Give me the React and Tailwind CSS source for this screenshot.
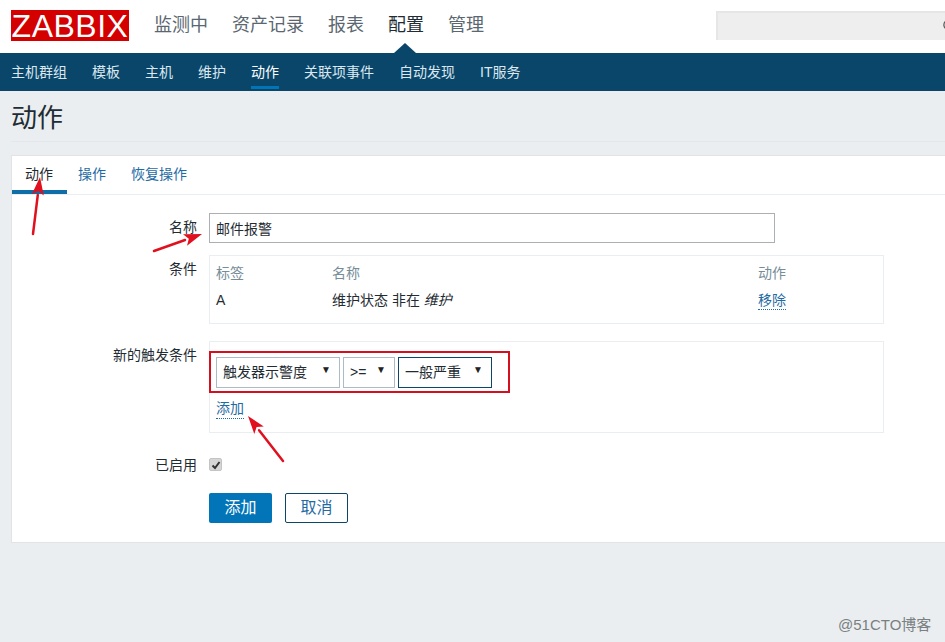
import { Search } from "lucide-react";

const topNav = ["监测中", "资产记录", "报表", "配置", "管理"];
const subNav = ["主机群组", "模板", "主机", "维护", "动作", "关联项事件", "自动发现", "IT服务"];

const Arrow = ({ x1, y1, x2, y2 }) => {
  // head is drawn back along the line from the tip
  const len = Math.hypot(x2 - x1, y2 - y1);
  const ux = (x2 - x1) / len;
  const uy = (y2 - y1) / len;
  const bx = x2 - ux * 18;
  const by = y2 - uy * 18;
  const nx = -uy * 6;
  const ny = ux * 6;
  return (
    <g>
      <line x1={x1} y1={y1} x2={bx} y2={by} stroke="#e0101e" strokeWidth="2.5" strokeLinecap="round" />
      <polygon points={`${x2},${y2} ${bx + nx},${by + ny} ${bx + ux * 4},${by + uy * 4} ${bx - nx},${by - ny}`} fill="#e0101e" />
    </g>
  );
};

const Dropdown = ({ label, className }) => (
  <div className={`flex items-center justify-between h-[31px] px-[6px] border bg-white text-[14px] text-[#1f2c33] ${className}`}>
    <span>{label}</span>
    <span className="text-[10px] text-[#222] -mt-1 mr-[2px]">▼</span>
  </div>
);

const Row = ({ label, children, className }) => (
  <div className={`flex ${className}`}>
    <div className="w-[185px] text-right text-[14px] text-[#1f2c33] shrink-0">{label}</div>
    <div className="ml-[12px]">{children}</div>
  </div>
);

const App = () => {
  return (
    <div className="relative w-[945px] h-[642px] overflow-hidden bg-[#ebeef0] font-['Liberation_Sans','Noto_Sans_CJK_SC',sans-serif]">
      {/* top bar */}
      <div className="relative flex items-start h-[53px] bg-white pl-[11px]">
        <div className="flex items-center justify-center w-[118px] h-[31px] mt-[10px] bg-[#d40000] text-white text-[32px] leading-none tracking-[0.5px]">
          ZABBIX
        </div>
        <div className="flex gap-[24px] ml-[25px] mt-[12px] text-[18px] leading-[26px] text-[#5a6770]">
          {topNav.map((item) => (
            <span key={item} className={item === "配置" ? "text-[#1f2c33]" : ""}>
              {item}
            </span>
          ))}
        </div>
        <div className="absolute left-[716px] top-[11px] w-[240px] h-[29px] bg-[#eeeeee] border-t-2 border-l-2 border-[#e6e6e6]">
          <Search className="absolute left-[224px] top-[5px] text-[#555]" size={15} />
        </div>
        <div className="absolute left-[394px] top-[43px] w-0 h-0 border-x-[11px] border-x-transparent border-b-[10px] border-b-[#0a466a]" />
      </div>

      {/* sub nav */}
      <div className="flex gap-[25px] h-[38px] pl-[11px] bg-[#0a466a] text-[14px] text-[#dbe8f0]">
        {subNav.map((item) => (
          <div
            key={item}
            className={`h-[36px] pt-[9px] leading-[20px] border-b-[3px] ${item === "动作" ? "border-[#0275b8] text-white" : "border-transparent"}`}
          >
            {item}
          </div>
        ))}
      </div>

      {/* title */}
      <div className="mx-[11px] mr-0 h-[51px] border-b border-[#e3e7ea] pt-[10px] text-[26px] leading-[34px] text-[#1f2c33]">
        动作
      </div>

      {/* panel */}
      <div className="ml-[11px] mt-[13px] w-[960px] h-[388px] bg-white border border-[#e0e4e7]">
        <div className="flex gap-[25px] h-[39px] pl-[13px] border-b border-[#ebeef0] text-[14px] text-[#1f6ba3]">
          <div className="relative leading-[36px] text-[#1f2c33]">
            动作
            <div className="absolute -left-[13px] top-[34px] w-[55px] h-[4px] bg-[#0f6ea8]" />
          </div>
          <div className="leading-[36px]">操作</div>
          <div className="leading-[36px]">恢复操作</div>
        </div>

        <div className="pt-[18px]">
          <Row label="名称" className="leading-[28px]">
            <input
              readOnly
              value="邮件报警"
              className="block w-[566px] h-[30px] px-[6px] border border-[#acb0b3] text-[14px] text-[#1f2c33] outline-none"
            />
          </Row>

          <Row label="条件" className="mt-[12px] leading-[28px]">
            <div className="w-[675px] h-[69px] border border-[#ebeef0] px-[6px] pt-[4px] text-[14px] leading-[27px]">
              <div className="flex text-[#768d99]">
                <div className="w-[116px]">标签</div>
                <div className="w-[426px]">名称</div>
                <div>动作</div>
              </div>
              <div className="flex text-[#1f2c33]">
                <div className="w-[116px]">A</div>
                <div className="w-[426px]">
                  维护状态 非在 <i>维护</i>
                </div>
                <div className="text-[#1f6ba3] leading-[18px] mt-[4px] h-[19px] border-b border-dotted border-[#1f6ba3]">移除</div>
              </div>
            </div>
          </Row>

          <Row label="新的触发条件" className="mt-[17px] leading-[28px]">
            <div className="w-[675px] h-[92px] border border-[#ebeef0] pt-[9px]">
              <div className="flex items-center gap-[3px] w-[301px] h-[42px] -ml-px pl-[5px] border-2 border-[#d40f1e]">
                <Dropdown label="触发器示警度" className="w-[124px] border-[#acbbc4]" />
                <Dropdown label=">=" className="w-[52px] border-[#acbbc4]" />
                <Dropdown label="一般严重" className="w-[94px] border-[#0a466a]" />
              </div>
              <div className="ml-[6px] mt-[6px] w-fit h-[20px] leading-[18px] text-[14px] text-[#1f6ba3] border-b border-dotted border-[#1f6ba3]">
                添加
              </div>
            </div>
          </Row>

          <Row label="已启用" className="mt-[18px] leading-[28px]">
            <div className="flex items-center justify-center w-[13px] h-[13px] mt-[7px] rounded-[2px] bg-[#d6d6d6] border border-[#c4c4c4]">
              <svg width="10" height="10" viewBox="0 0 10 10">
                <path d="M1.5 5.5 L4 8 L8.5 2" fill="none" stroke="#333" strokeWidth="2" />
              </svg>
            </div>
          </Row>

          <Row label="" className="mt-[14px]">
            <div className="flex gap-[13px] text-[16px]">
              <button className="w-[63px] h-[30px] rounded-[2px] bg-[#0275b8] text-white">添加</button>
              <button className="w-[63px] h-[30px] rounded-[2px] border border-[#0a466a] bg-white text-[#1f6ba3]">取消</button>
            </div>
          </Row>
        </div>
      </div>

      {/* annotation arrows */}
      <svg className="absolute left-0 top-0 pointer-events-none" width="945" height="642">
        <Arrow x1={33} y1={234} x2={40} y2={177} />
        <Arrow x1={154} y1={251} x2={202} y2={234} />
        <Arrow x1={283} y1={461} x2={248} y2={416} />
      </svg>

      {/* watermark */}
      <div className="absolute left-[838px] top-[615px] text-[15px] leading-[20px] text-[#7a7f82]">@51CTO博客</div>
    </div>
  );
};

export default App;
